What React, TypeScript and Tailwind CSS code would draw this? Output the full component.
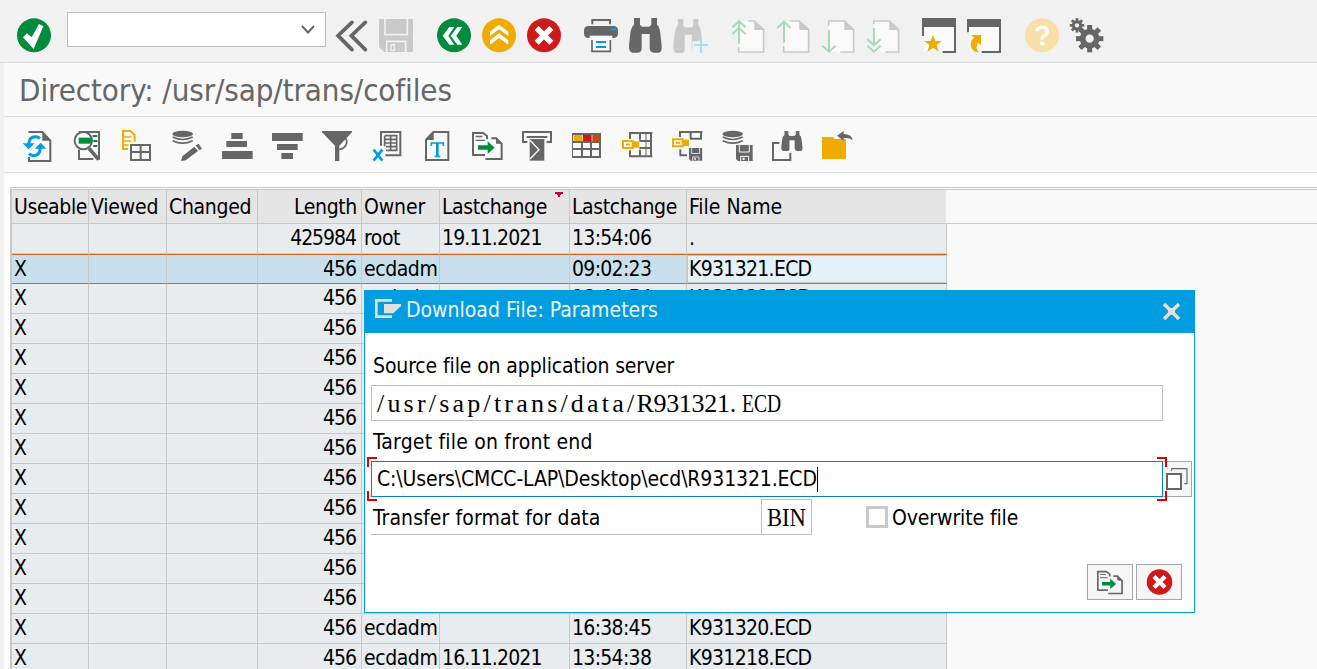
import React from 'react';
import clsx from 'clsx';

const GREY = '#666666';
const LIGHT = '#c9c9c9';
const GOLD = '#f0ab00';
const GREEN = '#008c3c';
const BLUE = '#009de0';
const RED = '#cf1a1c';

interface IconProps {
  view: string;
  className?: string;
  children: React.ReactNode;
}

const Icon = ({ view, className = 'size-9', children }: IconProps) => (
  <svg viewBox={view} className={clsx('shrink-0', className)} fill="none">
    {children}
  </svg>
);

const ToolIcon = ({ view, children }: IconProps) => (
  <Icon view={view} className="size-8">
    {children}
  </Icon>
);

const Binoculars = ({ transform, fill = GREY }: { transform?: string; fill?: string }) => (
  <path
    transform={transform}
    fill={fill}
    d="M13 0h18v20l6 6h22l6-6v-20h17v20q8 6 10 26l4 38q1 19-8 20h-17q-11-2-11-14v-42h-24v42q0 14-11 14h-17q-10-1-10-20l4-38q2-18 11-26z"
  />
);

const Floppy = ({ x, y }: { x: number; y: number }) => (
  <g transform={`translate(${x} ${y})`}>
    <path d="M0 0h50v48h-44l-6-6z" fill={GREY} />
    <path d="M10 0v21h30v-21M14 48v-14h24v14" stroke="#f9f9f9" strokeWidth="3" />
    <rect x="20" y="38" width="6" height="7" fill="#f9f9f9" />
  </g>
);

const Disks = ({ x }: { x: number }) => (
  <g transform={`translate(${x} 0)`}>
    <ellipse cx="32" cy="57" rx="31" ry="9.5" fill={GREY} />
    <path d="M2 66q30 15 60 0M2 77q30 15 60 0" stroke={GREY} strokeWidth="5" />
  </g>
);

const KeyTag = ({ x, y }: { x: number; y: number }) => (
  <g transform={`translate(${x} ${y})`}>
    <path d="M3 3h29v21h-29z" fill="#f9f9f9" stroke={GOLD} strokeWidth="6" />
    <path d="M32 4h19v19h-19z" fill={GOLD} />
    <path d="M12 13.500h12" stroke={GOLD} strokeWidth="6" />
  </g>
);

const CancelIcon = ({ className }: { className?: string }) => (
  <Icon view="318 54 108 108" className={className}>
    <circle cx="372" cy="106" r="51" fill={RED} />
    <path d="M350 84l44 44M394 84l-44 44" stroke="#fff" strokeWidth="17" />
  </Icon>
);

const ExportIcon = ({ className }: { className?: string }) => (
  <Icon view="486 45 96 96" className={className}>
    <path d="M525 120h-36v-66h30l12 9v9" stroke={GREY} strokeWidth="6" />
    <path d="M497 64.500h20M497 76h27" stroke={GREY} strokeWidth="4" />
    <path d="M526 132h49v-45l-17-17h-14" stroke={GREY} strokeWidth="6" />
    <path d="M558 67l19 19h-19z" fill={GREY} />
    <path d="M504 91h29v-12l21 19-21 18v-12h-29z" fill={GREEN} />
  </Icon>
);

const PageIcon = ({ outline, arrow }: { outline: string; arrow: string }) => (
  <Icon view="45 54 108 108">
    <path d="M74 64h44l28 26v66h-74v-84z" fill="#fafafa" />
    <path d={outline} stroke={LIGHT} strokeWidth="5" />
    <path d="M118 63l28 27h-28z" fill={LIGHT} />
    <path d={arrow} stroke="#a8d8bb" strokeWidth="6" />
  </Icon>
);

const Gear = ({ cx, cy, scale }: { cx: number; cy: number; scale: number }) => (
  <g transform={`translate(${cx} ${cy}) scale(${scale})`}>
    <circle r="21" stroke={GREY} strokeWidth="17" />
    {[0, 45, 90, 135, 180, 225, 270, 315].map((a) => (
      <rect key={a} x="-7.500" y="-41" width="15" height="16" fill={GREY} transform={`rotate(${a})`} />
    ))}
  </g>
);

const SystemBar = () => (
  <div className="flex h-[63px] items-start border-b border-[#dcdcdc] bg-[#f1f1f1] pl-4">
    <div className="mt-[18px]">
      <Icon view="48 54 108 108">
        <circle cx="102" cy="106" r="51" fill={GREEN} />
        <path d="M69 112l12-12 14 12 22-40 13 7-29 68z" fill="#fff" />
      </Icon>
    </div>
    <div className="mt-3 ml-[15px] flex h-[35px] w-[259px] items-start justify-end border border-[#bfbfbf] bg-white pt-3 pr-2.5">
      <svg viewBox="0 0 14 9" className="h-[9px] w-3.5" fill="none">
        <path d="M1 1l6 6.500 6-6.500" stroke={GREY} strokeWidth="2" />
      </svg>
    </div>
    <div className="mt-[18px] ml-2 flex gap-2">
      <Icon view="1002 54 108 108">
        <path d="M1056 67l-42 40 42 42M1096 67l-42 40 42 42" stroke={GREY} strokeWidth="11" strokeLinecap="round" />
      </Icon>
      <Icon view="1134 54 108 108">
        <path d="M1137 57h102v99h-86l-16-15z" fill={LIGHT} />
        <path d="M1155 57v47h67v-47M1160 157v-33h57v33" stroke="#f1f1f1" strokeWidth="5" />
        <path d="M1173 134h10v17h-10z" stroke="#f1f1f1" strokeWidth="4" />
      </Icon>
    </div>
    <div className="mt-[18px] ml-[22px] flex gap-[21px]">
      <div className="flex gap-[9px]">
        <Icon view="48 54 108 108">
          <circle cx="102" cy="106" r="51" fill={GREEN} />
          <path d="M68 107l20-26h15l-18 26 18 27h-15zM92 107l20-26h15l-18 26 18 27h-15z" fill="#fff" />
        </Icon>
        <Icon view="183 54 108 108">
          <circle cx="237" cy="106" r="51" fill={GOLD} />
          <path d="M210 95l27-21 28 21v13l-28-20-27 20zM210 121l27-21 28 21v13l-28-20-27 20z" fill="#fff" />
        </Icon>
        <CancelIcon />
      </div>
      <div className="flex gap-[9px]">
        <Icon view="489 54 108 108">
          <path d="M517 73v-13h53v13" stroke={GREY} strokeWidth="6" />
          <rect x="492" y="78" width="102" height="36" rx="13" fill={GREY} />
          <rect x="573" y="83" width="15" height="8" fill={BLUE} />
          <rect x="509" y="107" width="68" height="9" fill="#f1f1f1" />
          <rect x="516" y="110" width="55" height="44" fill="#fafafa" />
          <path d="M516 120v34h55v-34" stroke={GREY} strokeWidth="5" />
          <path d="M528 126h30M528 141h30" stroke={BLUE} strokeWidth="6" />
        </Icon>
        <Icon view="624 54 108 108">
          <Binoculars transform="translate(629 54)" />
        </Icon>
        <Icon view="759 54 108 108">
          <Binoculars transform="translate(762 57) scale(.89 .98)" fill={LIGHT} />
          <path d="M831 122h36v40h-50v-38h14z" fill="#f1f1f1" />
          <path d="M843 114v44M822 135h42" stroke="#a8dcf2" strokeWidth="6" />
        </Icon>
      </div>
      <div className="flex gap-[9px]">
        <PageIcon
          outline="M100 63h18l28 26v67h-75v-14"
          arrow="M72 66v66M52 82l20-18 20 18M52 102l20-18 20 18"
        />
        <PageIcon outline="M90 63h28l28 26v67h-75v-18" arrow="M72 66v62M52 84l20-19 20 19" />
        <PageIcon outline="M71 78v-15h47l28 26v67h-40" arrow="M72 91v64M52 137l20 18 20-18" />
        <PageIcon
          outline="M71 72v-9h47l28 26v67h-40"
          arrow="M72 84v53M52 118l20 18 20-18M52 137l20 18 20-18"
        />
      </div>
      <div className="-ml-px flex gap-[9px]">
        <Icon view="618 54 108 108">
          <path d="M621 54h102v27h-102z" fill={GREY} />
          <path d="M627 81h90v72h-90z" fill="#fafafa" />
          <path d="M624 81v27M720 81v75h-37" stroke={GREY} strokeWidth="6" />
          <path d="M654 104l7 19h20l-16 12 6 20-17-12-17 12 6-20-16-12h20z" fill={GOLD} />
        </Icon>
        <Icon view="753 54 108 108">
          <path d="M756 57h102v24h-102z" fill={GREY} />
          <path d="M762 81h90v72h-90z" fill="#fafafa" />
          <path d="M759 81v16M855 81v75h-55" stroke={GREY} strokeWidth="6" />
          <path d="M769 105h29v31l-9-8q-9 14 2 30-22-4-24-24 0-12 10-21z" fill={GOLD} />
        </Icon>
      </div>
      <div className="ml-px flex gap-[9px]">
        <Icon view="927 54 108 108">
          <circle cx="981" cy="106" r="51" fill="#f8dfa8" />
          <path d="M965 94q1-12 16-12t16 12q0 7-8 12t-8 13" stroke="#fff" strokeWidth="10" />
          <path d="M975 125h13v11h-13z" fill="#fff" />
        </Icon>
        <Icon view="1062 54 108 108">
          <Gear cx={1124} cy={116} scale={1} />
          <Gear cx={1086} cy={76} scale={0.53} />
        </Icon>
      </div>
    </div>
  </div>
);

const AppToolbar = () => (
  <div className="flex h-14 items-start gap-[18px] border-b border-[#dcdcdc] bg-[#f9f9f9] pt-[13px] pl-[18px]">
    <ToolIcon view="66 45 96 96">
      <path d="M85 51h42l24 26v61h-64v-12" stroke={GREY} strokeWidth="6" />
      <path d="M127 50l26 27h-26z" fill={GREY} />
      <path d="M86 88q1-23 20-23 8 0 14 5M121 98q-1 24-20 24-8 0-14-6" stroke={BLUE} strokeWidth="9" />
      <path d="M68 85h36l-18 18zM104 101h35l-17-18z" fill={BLUE} />
    </ToolIcon>
    <ToolIcon view="216 45 96 96">
      <path d="M236 51h61v83M237 104v28h43" stroke={GREY} strokeWidth="6" />
      <path d="M278 63h14M280 78h12M280 93h12" stroke={GREEN} strokeWidth="6" />
      <circle cx="250" cy="77" r="26" fill="#f9f9f9" stroke={GREY} strokeWidth="6" />
      <path d="M236 68h38v18h-38z" fill={GREEN} />
      <path d="M267 100l29 34" stroke={GREY} strokeWidth="11" />
    </ToolIcon>
    <ToolIcon view="366 45 96 96">
      <path d="M384 102h-15v-54h22l13 12v20" stroke={GOLD} strokeWidth="6" />
      <path d="M372 66h22M372 78h22M372 90h14" stroke={GOLD} strokeWidth="5" />
      <path d="M393 90h57v45h-57zM422 90v45M392 111h59" stroke={GREY} strokeWidth="6" />
    </ToolIcon>
    <ToolIcon view="516 45 96 96">
      <Disks x={516} />
      <path d="M543 138l4-14 36-29 11 13-37 28zM587 91l9-5 10 15-8 5z" fill={GREY} />
    </ToolIcon>
    <ToolIcon view="666 45 96 96">
      <path d="M694 54h34v18h-34zM679 78h62v18h-62zM666 108h92v24h-92z" fill={GREY} />
    </ToolIcon>
    <ToolIcon view="816 45 96 96">
      <path d="M816 54h92v24h-92zM831 87h62v18h-62zM844 114h35v18h-35z" fill={GREY} />
    </ToolIcon>
    <ToolIcon view="36 45 96 96">
      <path d="M36 48h90v4l-38 40v46h-13v-46l-39-40z" fill={GREY} />
      <path d="M104 66q10 12 4 24-6 11-20 13" stroke={GREY} strokeWidth="5" />
    </ToolIcon>
    <ToolIcon view="186 45 96 96">
      <path d="M213 92v-41h58v70h-45" stroke={GREY} strokeWidth="6" />
      <path d="M224 62h36v44h-32M242 62v44M224 73h36M224 84h36M228 95h32M224 62v32" stroke={GREY} strokeWidth="5" />
      <path d="M191 104l26 33M217 104l-26 33" stroke={BLUE} strokeWidth="8" />
    </ToolIcon>
    <ToolIcon view="336 45 96 96">
      <path d="M348 135v-61l22-23h45v84z" stroke={GREY} strokeWidth="6" />
      <path d="M345 75l26-26v26z" fill={GREY} />
      <path d="M364 93v-9h36v9M374 124h17" stroke={BLUE} strokeWidth="5" />
      <path d="M382 84v40" stroke={BLUE} strokeWidth="8" />
    </ToolIcon>
    <ExportIcon className="size-8" />
    <ToolIcon view="636 45 96 96">
      <path d="M652 81h-13v-30h84v30h-13M650 66h62" stroke={GREY} strokeWidth="6" />
      <path d="M659 72h44v65h-44z" fill={GREY} />
      <path d="M660 76l27 28-27 28" stroke="#f9f9f9" strokeWidth="4" />
    </ToolIcon>
    <ToolIcon view="786 45 96 96">
      <path d="M791 59h26v19h-26z" fill={GOLD} />
      <path d="M819 59h26v19h-26z" fill={RED} />
      <path d="M847 59h24v19h-24z" fill="#d04a00" />
      <path d="M786 57h84v69h-84zM786 81h84M786 102h84M816 78v48M843 78v48" stroke={GREY} strokeWidth="6" />
    </ToolIcon>
    <ToolIcon view="66 45 96 96">
      <path
        d="M90 72v-18h67M90 106v18h67M120 54v20M120 104v20M153 54v70M118 78h38M118 99h38"
        stroke={GREY}
        strokeWidth="6"
      />
      <path d="M138 54v70" stroke={GREY} strokeWidth="3" />
      <KeyTag x={66} y={75} />
    </ToolIcon>
    <ToolIcon view="216 45 96 96">
      <path d="M240 66v-15h67M272 51v20h34M303 51v20M241 103v18h20" stroke={GREY} strokeWidth="6" />
      <KeyTag x={216} y={70} />
      <g transform="translate(267 99) scale(.79)">
        <Floppy x={0} y={0} />
      </g>
    </ToolIcon>
    <ToolIcon view="366 45 96 96">
      <Disks x={366} />
      <Floppy x={408} y={90} />
    </ToolIcon>
    <ToolIcon view="516 45 96 96">
      <path d="M538 84h-19v51h52v-22" stroke={GREY} strokeWidth="6" />
      <Binoculars transform="translate(545 48) scale(.65 .58)" />
    </ToolIcon>
    <ToolIcon view="666 45 96 96">
      <path d="M666 69q0-3 3-3h28q3 0 5 3l2 3h31q3 0 3 3v54q0 3-3 3h-66q-3 0-3-3z" fill={GOLD} />
      <path d="M711 62l20-14v9q24 0 27 19-12-9-27-6v7z" fill={GREY} />
    </ToolIcon>
  </div>
);

interface FileRow {
  useable?: string;
  length: string;
  owner?: string;
  date?: string;
  time?: string;
  name?: string;
}

const rows: FileRow[] = [
  { length: '425984', owner: 'root', date: '19.11.2021', time: '13:54:06', name: '.' },
  { useable: 'X', length: '456', owner: 'ecdadm', time: '09:02:23', name: 'K931321.ECD' },
  { useable: 'X', length: '456', owner: 'ecdadm', time: '18:44:54', name: 'K931321.ECD' },
  ...Array.from({ length: 10 }, () => ({ useable: 'X', length: '456' })),
  { useable: 'X', length: '456', owner: 'ecdadm', time: '16:38:45', name: 'K931320.ECD' },
  { useable: 'X', length: '456', owner: 'ecdadm', date: '16.11.2021', time: '13:54:38', name: 'K931218.ECD' },
];

const columns = 'grid grid-cols-[77px_78px_91px_104px_78px_130px_117px_260px]';

const headers = [
  { label: 'Useable', className: 'tracking-[-0.4px]' },
  { label: 'Viewed', className: 'tracking-[-0.2px]' },
  { label: 'Changed', className: 'tracking-[-0.3px]' },
  { label: 'Length', className: 'tracking-[-0.35px] text-right pr-1' },
  { label: 'Owner', className: 'tracking-[-0.1px]' },
  { label: 'Lastchange', className: 'tracking-[-0.4px]', sorted: true },
  { label: 'Lastchange', className: 'tracking-[-0.4px]' },
  { label: 'File Name', className: '' },
];

const FileTable = () => (
  <div className="mt-3.5 ml-1.5 border-t border-l border-[#c8c8c8] pt-px">
    <div className="border-t border-l border-[#c8c8c8] bg-[#f9f9f9]">
      <div className="h-[34px] border-b border-[#c6c8ca]">
        <div className={clsx(columns, 'h-[33px] w-[934px] bg-[#e5e5e5]')}>
          {headers.map((h, i) => (
            <div
              key={i}
              className={clsx(
                'relative pl-0.5 leading-[35px] whitespace-nowrap',
                i < 7 && 'border-r border-[#c6c8ca]',
                h.className,
              )}
            >
              {h.label}
              {h.sorted && (
                <svg viewBox="0 0 8 5" className="absolute top-0.5 right-1.5 h-[5px] w-2">
                  <path d="M0 0h8v2h-2v1h-1v2h-2v-2h-1v-1h-2z" fill="#c4003a" />
                </svg>
              )}
            </div>
          ))}
        </div>
      </div>
      {rows.map((row, i) => {
        const selected = i === 1;
        const cell = clsx(
          'h-[30px] border-r pl-0.5 whitespace-nowrap',
          selected
            ? 'border-y border-y-[#d9661f] border-r-[#c6c8ca] bg-[#c9e0ec] leading-[28px]'
            : 'border-b border-[#c6c8ca] bg-[#e8ecef] leading-[28px]',
        );
        return (
          <div key={i} className={clsx(columns, 'w-[935px]')}>
            <div className={cell}>{row.useable}</div>
            <div className={cell} />
            <div className={cell} />
            <div className={clsx(cell, 'pr-[5px] text-right tracking-[-1.05px]')}>{row.length}</div>
            <div className={clsx(cell, 'tracking-[-0.43px]')}>{row.owner}</div>
            <div className={clsx(cell, 'tracking-[-0.85px]')}>{row.date}</div>
            <div className={clsx(cell, 'tracking-[-0.7px]')}>{row.time}</div>
            {selected ? (
              <div className="h-[30px] border-y border-[#d9661f]">
                <div className="h-7 border border-[#c6c8ca] bg-[#e4f1f9] pl-px leading-[26px] tracking-[-0.7px]">
                  {row.name}
                </div>
              </div>
            ) : (
              <div className={clsx(cell, 'tracking-[-0.7px]')}>{row.name}</div>
            )}
          </div>
        );
      })}
    </div>
  </div>
);

const DownloadDialog = () => (
  <div className="absolute top-[290px] left-[364px] h-[323px] w-[831px] border border-[#009de0] bg-white">
    <div className="flex h-[42px] items-start bg-[#009de0] pl-2.5">
      <svg viewBox="45 42 78 57" className="mt-2 h-[19px] w-[26px]" fill="none">
        <path d="M96 46h-47v49h47" stroke="#e0e0e0" strokeWidth="8" />
        <path d="M72 57h51v6l-23 22h-28z" fill="#e0e0e0" />
      </svg>
      <span className="ml-[5px] leading-[38px] text-[#eef4f8]">Download File: Parameters</span>
      <svg viewBox="0 0 17 17" className="mt-3 mr-3.5 ml-auto size-[17px]" fill="none">
        <path d="M1 1l15 15M16 1l-15 15" stroke="#e0e0e0" strokeWidth="3.500" />
        <path d="M5 5h7v7h-7z" fill="#e0e0e0" />
      </svg>
    </div>
    <div className="pl-1.5">
      <div className="h-[52px] pt-[19px] pl-0.5 leading-[28px] tracking-[-0.12px]">
        Source file on application server
      </div>
      <div className="h-9 w-[792px] border border-[#bfbfbf] pl-[5px] font-['Liberation_Serif',serif] text-[26px] leading-[35px] whitespace-pre">
        <span className="tracking-[3.2px]">/usr/sap/trans/data/</span>
        <span className="-ml-px tracking-[-0.3px]">R931321.</span>
        <span className="ml-1.5 inline-block origin-left scale-x-[0.75]">ECD</span>
      </div>
      <div className="h-10 pt-[7px] pl-0.5 leading-[28px] tracking-[0.2px]">Target file on front end</div>
      <div className="relative flex h-9 w-[822px]">
        <div className="flex w-[792px] items-center border border-[#0a7fc2] pl-[5px]">
          <span className="pt-0.5 tracking-[-0.13px]">C:\Users\CMCC-LAP\Desktop\ecd\R931321.ECD</span>
          <span className="h-[25px] w-px bg-black" />
        </div>
        <div className="flex w-[29px] items-center border border-l-0 border-[#a6a6a6] bg-[#f6f6f6] pl-[3px]">
          <svg viewBox="1038 54 66 66" className="size-[22px]" fill="none">
            <path d="M1055 62v-6h46v45h-8" stroke={GREY} strokeWidth="3.500" />
            <path d="M1041 72h42v45h-42z" fill="#fff" stroke={GREY} strokeWidth="6" />
          </svg>
        </div>
        <div className="absolute -top-1 -left-1 h-2.5 w-2.5 border-t-2 border-l-2 border-[#e00000]" />
        <div className="absolute -bottom-1 -left-1 h-2.5 w-2.5 border-b-2 border-l-2 border-[#e00000]" />
        <div className="absolute -top-1 left-[786px] h-2.5 w-2.5 border-t-2 border-r-2 border-[#e00000]" />
        <div className="absolute -bottom-1 left-[786px] h-2.5 w-2.5 border-r-2 border-b-2 border-[#e00000]" />
      </div>
      <div className="mt-0.5 flex h-9">
        <div className="w-[390px] border-b border-[#bfbfbf] pl-0.5 leading-[38px] tracking-[0.1px]">
          Transfer format for data
        </div>
        <div className="w-[51px] border border-[#bfbfbf] pl-[5px] font-['Liberation_Serif',serif] text-[26px] leading-[35px]">
          <span className="inline-block origin-left scale-x-[0.87]">BIN</span>
        </div>
        <div className="mt-[7px] ml-[54px] size-[22px] border-[3px] border-[#c9c9c9]" />
        <span className="ml-1 leading-[38px] tracking-[-0.1px]">Overwrite file</span>
      </div>
      <div className="mt-[29px] mr-3 flex justify-end gap-[3px]">
        <button className="flex h-9 w-[46px] items-center justify-center border border-[#a6a6a6] bg-[#f6f6f6]">
          <ExportIcon className="size-[27px]" />
        </button>
        <button className="flex h-9 w-[46px] items-center justify-center border border-[#a6a6a6] bg-[#f6f6f6]">
          <CancelIcon className="size-[27px]" />
        </button>
      </div>
    </div>
  </div>
);

export default function App() {
  return (
    <div className="relative h-[669px] w-[1317px] overflow-hidden bg-white font-['DejaVu_Sans_Condensed','DejaVu_Sans',sans-serif] text-[21px] text-black">
      <SystemBar />
      <div className="h-[606px] border-l-4 border-[#f1f1f1]">
        <div className="h-[54px] border-b border-[#dcdcdc] bg-[#f9f9f9] pl-[15px] text-[31px] leading-[54px] tracking-[-0.1px] text-[#666666]">
          Directory: /usr/sap/trans/cofiles
        </div>
        <AppToolbar />
        <FileTable />
      </div>
      <DownloadDialog />
    </div>
  );
}
